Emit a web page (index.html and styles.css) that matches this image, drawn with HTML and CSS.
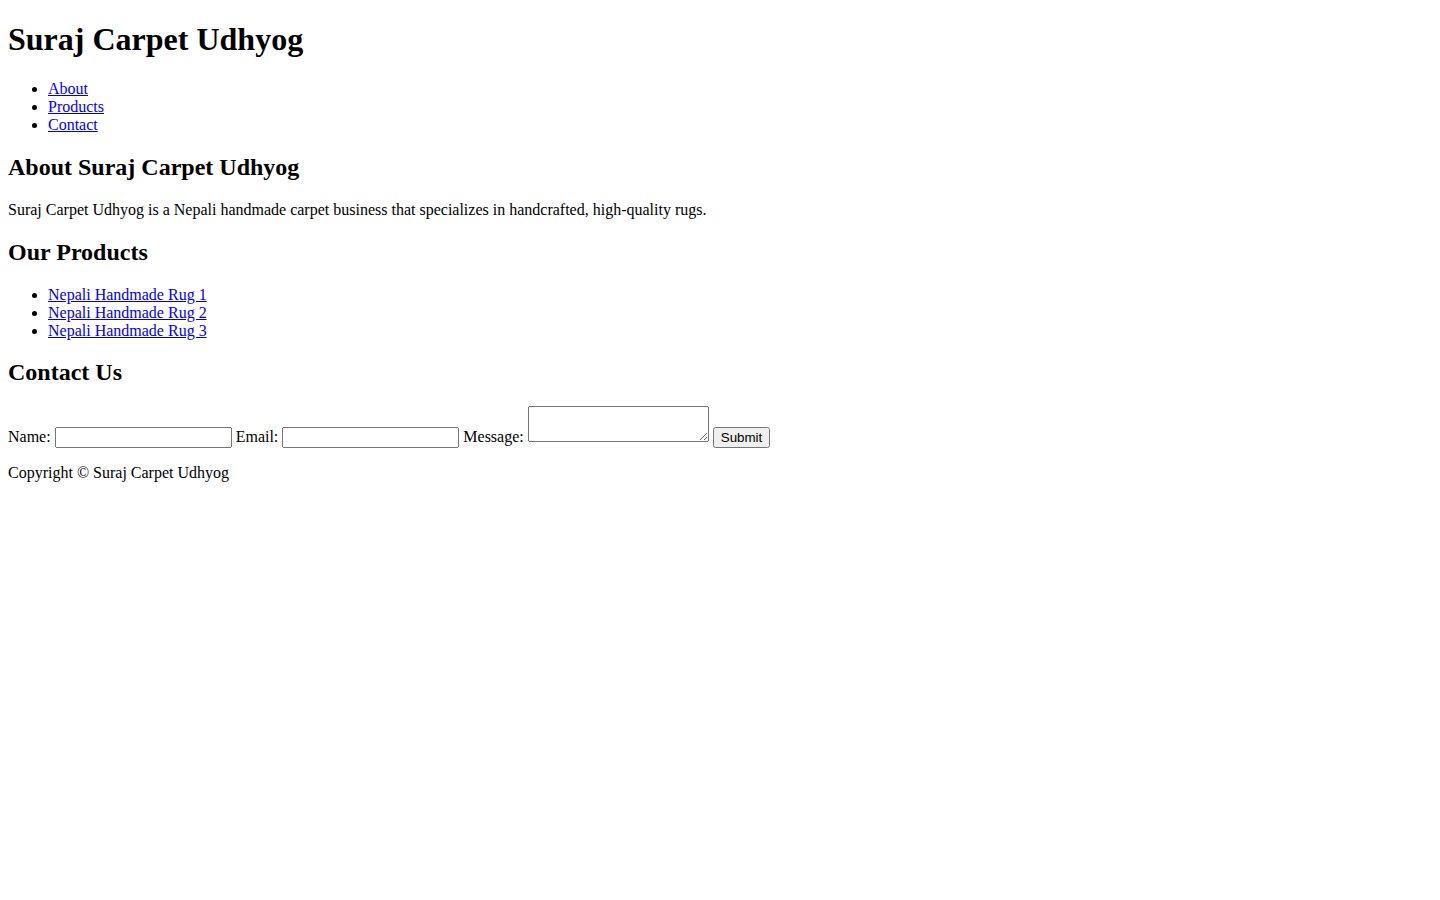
FILE: index.html
```html
<!DOCTYPE html>
<html lang="en">
<head>
<meta charset="utf-8">
<title>Suraj Carpet Udhyog</title>
<link rel="stylesheet" href="styles.css">
</head>
<body class="page">
<header>
<h1>Suraj Carpet Udhyog</h1>
<nav>
<ul>
<li><a href="#about">About</a></li>
<li><a href="#products">Products</a></li>
<li><a href="#contact">Contact</a></li>
</ul>
</nav>
</header>
<main>
<section id="about">
<h2>About Suraj Carpet Udhyog</h2>
<p>Suraj Carpet Udhyog is a Nepali handmade carpet business that specializes in handcrafted, high-quality rugs.</p>
</section>
<section id="products">
<h2>Our Products</h2>
<ul>
<li><a href="#">Nepali Handmade Rug 1</a></li>
<li><a href="#">Nepali Handmade Rug 2</a></li>
<li><a href="#">Nepali Handmade Rug 3</a></li>
</ul>
</section>
<section id="contact">
<h2>Contact Us</h2>
<form class="contact-form">
<label for="name">Name:</label>
<input class="field" type="text" id="name" name="name">
<label for="email">Email:</label>
<input class="field" type="email" id="email" name="email">
<label for="message">Message:</label>
<textarea class="message" id="message" name="message"></textarea>
<input type="submit" value="Submit">
</form>
</section>
</main>
<footer>
<p>Copyright &copy; Suraj Carpet Udhyog</p>
</footer>
</body>
</html>
```
FILE: styles.css
```css
.page {
  font-family: "Liberation Serif", "Times New Roman", serif;
  margin: 0 8px 8px;
}

.field {
  width: 169px;
}

.message {
  box-sizing: border-box;
  width: 181px;
}
```
